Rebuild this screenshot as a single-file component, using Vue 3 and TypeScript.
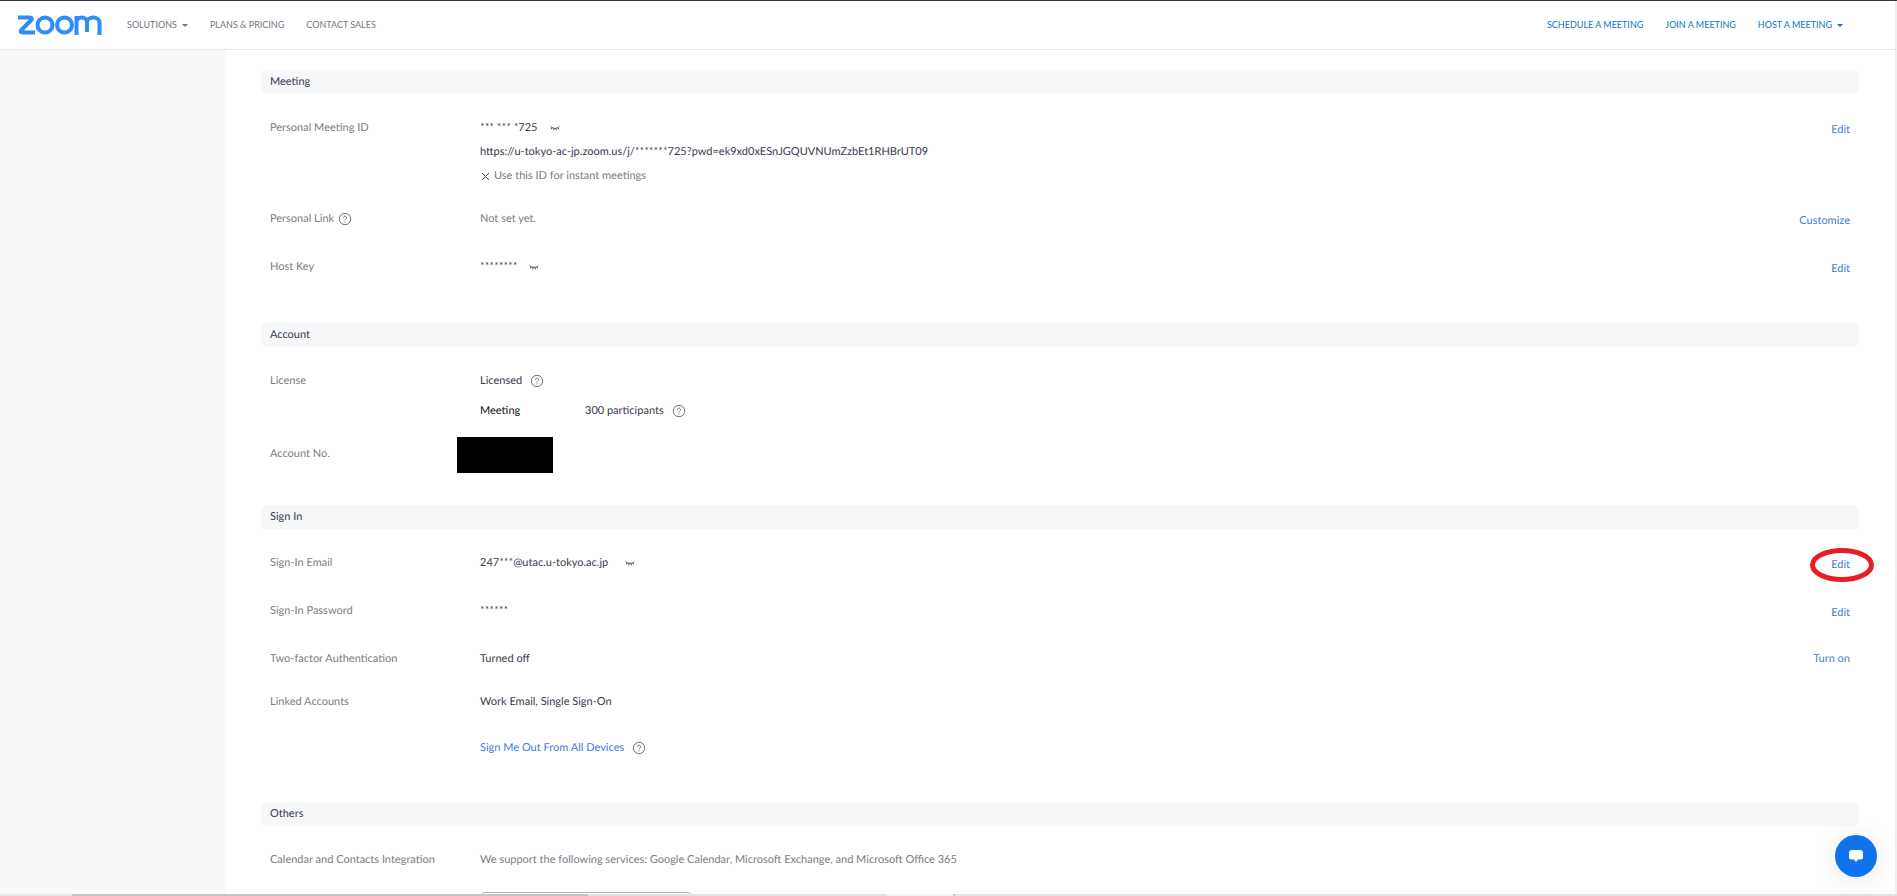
<script setup lang="ts">
import { h, type FunctionalComponent } from 'vue'

const HelpIcon: FunctionalComponent = () =>
  h('svg', { width: 14, height: 14, viewBox: '0 0 14 14', fill: 'none', stroke: '#74747f', 'aria-hidden': 'true' }, [
    h('circle', { cx: 7, cy: 7, r: 5.7, 'stroke-width': 1 }),
    h('path', { d: 'M5.4 5.8a1.6 1.6 0 1 1 2.4 1.4c-.6.3-.8.6-.8 1.2', 'stroke-width': 1 }),
    h('path', { d: 'M7 9.3v1', 'stroke-width': 1 }),
  ])

const HiddenIcon: FunctionalComponent = () =>
  h('svg', { width: 10, height: 6, viewBox: '0 0 10 6', fill: 'none', stroke: '#4c4c58', 'aria-hidden': 'true' }, [
    h('path', { d: 'M.6 1.400C2.600 4 7.400 4 9.400 1.400M2 2.600l-.9 1.700M4 3.300l-.3 2M6 3.300l.3 2M8 2.600l.9 1.700', 'stroke-width': 1 }),
  ])
</script>

<template>
  <div class="page">
    <header class="topbar">
      <a class="logo" href="#" aria-label="Zoom">
        <svg width="84" height="20" viewBox="0 0 84 20" fill="none" stroke="#2d8cff" stroke-width="4">
          <path d="M0 2.5h11.5c2.6 0 3 1.4 1.4 3L3.3 15c-1.1 1.2-.7 2.5 1.2 2.5H17" />
          <circle cx="27" cy="10" r="7.5" />
          <circle cx="46.5" cy="10" r="7.5" />
          <path d="M58.5 20V7.500c0-6.600 10.500-6.600 10.500 0V17M69 7.500c0-6.600 12.500-6.600 12.500 0V20M58.500 8V1" />
        </svg>
      </a>
      <nav class="nav">
        <a href="#">SOLUTIONS <span class="caret"></span></a>
        <a href="#">PLANS &amp; PRICING</a>
        <a href="#">CONTACT SALES</a>
      </nav>
      <nav class="nav nav-actions">
        <a href="#">SCHEDULE A MEETING</a>
        <a href="#">JOIN A MEETING</a>
        <a href="#">HOST A MEETING <span class="caret"></span></a>
      </nav>
    </header>

    <div class="body">
      <aside class="sidebar"></aside>
      <main class="content">
        <section>
          <h2>Meeting</h2>
          <div class="row tight">
            <div class="label">Personal Meeting ID</div>
            <div class="value">
              <div class="line"><span>*** *** *725</span><button class="icon-btn" aria-label="Show meeting ID"><HiddenIcon /></button></div>
              <div class="line">https://u-tokyo-ac-jp.zoom.us/j/*******725?pwd=ek9xd0xESnJGQUVNUmZzbEt1RHBrUT09</div>
              <div class="line muted cross">
                <svg width="9" height="9" viewBox="0 0 9 9" stroke="#4c4c58" aria-hidden="true"><path d="M1 1l7 7M8 1L1 8" /></svg>
                <span>Use this ID for instant meetings</span>
              </div>
            </div>
            <button class="link">Edit</button>
          </div>
          <div class="row">
            <div class="label line">Personal Link<button class="icon-btn help-near" aria-label="About Personal Link"><HelpIcon /></button></div>
            <div class="value muted">Not set yet.</div>
            <button class="link">Customize</button>
          </div>
          <div class="row">
            <div class="label">Host Key</div>
            <div class="value line"><span>********</span><button class="icon-btn" aria-label="Show host key"><HiddenIcon /></button></div>
            <button class="link">Edit</button>
          </div>
        </section>

        <section class="compact">
          <h2>Account</h2>
          <div class="row tight">
            <div class="label">License</div>
            <div class="value">
              <div class="line">Licensed<button class="icon-btn help" aria-label="About license"><HelpIcon /></button></div>
              <div class="line plan">
                <span class="plan-name">Meeting</span>300 participants<button class="icon-btn help" aria-label="About capacity"><HelpIcon /></button>
              </div>
            </div>
          </div>
          <div class="row">
            <div class="label">Account No.</div>
            <div class="value"><span class="redacted"></span></div>
          </div>
        </section>

        <section>
          <h2>Sign In</h2>
          <div class="row">
            <div class="label">Sign-In Email</div>
            <div class="value line email"><span>247***@utac.u-tokyo.ac.jp</span><button class="icon-btn" aria-label="Show email"><HiddenIcon /></button></div>
            <button class="link marked">
              Edit
              <svg class="ring" width="66" height="36" viewBox="0 0 66 36" fill="none" aria-hidden="true"><ellipse cx="33" cy="18" rx="29.500" ry="14.500" stroke="#e81c24" stroke-width="5" /></svg>
            </button>
          </div>
          <div class="row">
            <div class="label">Sign-In Password</div>
            <div class="value">******</div>
            <button class="link">Edit</button>
          </div>
          <div class="row tight">
            <div class="label">Two-factor Authentication</div>
            <div class="value">Turned off</div>
            <button class="link level">Turn on</button>
          </div>
          <div class="row">
            <div class="label">Linked Accounts</div>
            <div class="value">Work Email, Single Sign-On</div>
          </div>
          <div class="row">
            <div class="value second line"><button class="link level">Sign Me Out From All Devices</button><button class="icon-btn help" aria-label="About signing out"><HelpIcon /></button></div>
          </div>
        </section>

        <section>
          <h2>Others</h2>
          <div class="row">
            <div class="label">Calendar and Contacts Integration</div>
            <div class="value muted">
              We support the following services: Google Calendar, Microsoft Exchange, and Microsoft Office 365
              <button class="configure" aria-label="Configure Calendar and Contacts Service"></button>
            </div>
          </div>
        </section>
      </main>
    </div>

    <button class="chat" aria-label="Open chat">
      <svg width="14" height="12" viewBox="0 0 14 12" fill="#fff"><path d="M3 0h8a3 3 0 0 1 3 3v4a2.500 2.500 0 0 1-2.500 2.500H9L7 12 5 9.500H2.500A2.500 2.500 0 0 1 0 7V3a3 3 0 0 1 3-3z" /></svg>
    </button>
    <div class="scroll-y"></div>
    <div class="scroll-x"></div>
  </div>
</template>

<style>
html,
body {
  background: #fff;
  overflow: hidden;
}
</style>

<style scoped>
* {
  box-sizing: border-box;
}
.page {
  position: relative;
  display: flex;
  flex-direction: column;
  height: 100vh;
  overflow: hidden;
  font-family: Lato, "Liberation Sans", sans-serif;
  font-size: 11px;
  line-height: 24px;
  text-rendering: geometricPrecision;
  color: #39394d;
}
button {
  font: inherit;
  text-rendering: inherit;
  border: 0;
  padding: 0;
  background: none;
  cursor: pointer;
}
a {
  color: inherit;
  text-decoration: none;
}
.topbar {
  display: flex;
  align-items: center;
  flex: none;
  height: 50px;
  padding: 0 54px 0 18px;
  border-top: 1px solid #39344a;
  border-bottom: 1px solid #e8e8ec;
}
.logo {
  display: flex;
  margin-right: 25px;
}
.nav {
  display: flex;
  gap: 22px;
  font-size: 9px;
  text-rendering: auto;
  color: #747480;
}
.nav a {
  display: flex;
  align-items: center;
  gap: 5px;
}
.nav-actions {
  margin-left: auto;
  color: #0e71c8;
}
.caret {
  border: 3px solid transparent;
  border-top-color: currentColor;
  border-bottom: 0;
}
.body {
  display: flex;
  flex: 1;
  min-height: 0;
}
.sidebar {
  flex: none;
  width: 226px;
  background: #f7f8fa;
}
.content {
  flex: 1;
  padding: 20px 38px 0 35px;
}
section {
  margin-bottom: 42px;
}
section.compact {
  margin-bottom: 39px;
}
h2 {
  margin: 0 0 22px;
  padding: 0 9px;
  border-radius: 5px;
  background: #f7f8fa;
  font-size: 11px;
  font-weight: 400;
  line-height: 24px;
}
.row {
  display: grid;
  grid-template-columns: 210px 1fr auto;
  align-items: start;
  margin: 0 9px 22px;
}
.row.tight {
  margin-bottom: 19px;
}
.label,
.muted {
  color: #7c7c86;
}
.value {
  position: relative;
}
.value.second {
  grid-column: 2;
}
.line {
  display: flex;
  align-items: center;
}
.plan {
  margin-top: 6px;
}
.plan-name {
  width: 105px;
  color: #131326;
}
.cross {
  gap: 4px;
  padding-left: 1px;
}
.icon-btn {
  display: flex;
  margin-left: 12px;
}
.email .icon-btn {
  margin-left: 17px;
}
.icon-btn.help {
  margin-left: 8px;
}
.icon-btn.help-near {
  margin-left: 4px;
}
.link {
  padding-top: 2px;
  color: #467bdc;
}
.link.level {
  padding-top: 0;
}
.marked {
  position: relative;
}
.ring {
  position: absolute;
  left: 50%;
  top: 50%;
  margin: -17px 0 0 -32px;
}
.redacted {
  position: absolute;
  left: -23px;
  top: -5px;
  width: 96px;
  height: 36px;
  background: #000;
}
.configure {
  display: block;
  width: 213px;
  height: 28px;
  margin-top: 20px;
  border: 1px solid #b4b4bc;
  border-radius: 5px;
}
.chat {
  position: absolute;
  right: 20px;
  bottom: 19px;
  display: flex;
  align-items: center;
  justify-content: center;
  width: 42px;
  height: 42px;
  border-radius: 50%;
  background: #0e72ed;
  box-shadow: 0 2px 24px rgba(0, 0, 0, 0.1);
}
.scroll-y {
  position: absolute;
  top: 1px;
  right: 0;
  bottom: 0;
  width: 2px;
  background: #f0f0f1;
}
.scroll-x {
  position: absolute;
  right: 0;
  bottom: 0;
  left: 0;
  height: 2px;
  background: linear-gradient(to right, #e6e6e8 72px, #c6c6c8 72px 588px, #e2e2e3 588px 887px, #f4f4f5 887px 953px, #c6c6c8 953px 955px, #e2e2e3 955px);
}
</style>
